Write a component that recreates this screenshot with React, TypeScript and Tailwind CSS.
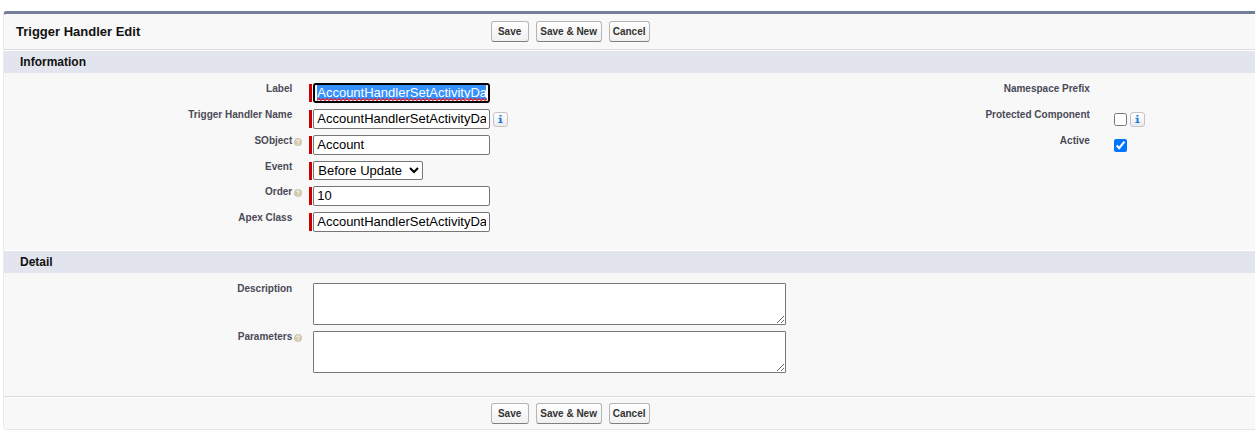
import { useEffect, useRef } from "react";
import type { ReactNode } from "react";
import { clsx } from "clsx";

const inputClass =
  "h-5 w-[177px] rounded-[2px] border border-[#767676] bg-white px-[3px] pb-0.5 text-[13px] text-black";

function HelpIcon() {
  return (
    <svg viewBox="0 0 8 8" className="size-2" aria-hidden="true">
      <circle cx="4" cy="4" r="4" fill="#d3c8ae" />
      <path
        d="M2.7 3.1C2.7 1.4 5.3 1.5 5.3 3C5.3 3.9 4 3.8 4 4.9M4 5.6V6.5"
        fill="none"
        stroke="#fff"
        strokeWidth="1"
      />
    </svg>
  );
}

function InfoButton() {
  return (
    <button
      type="button"
      aria-label="Info"
      className="flex size-[15px] items-center justify-center rounded-[3px] border border-[#c4c4c8] bg-linear-to-b from-white to-[#ececef]"
    >
      <svg viewBox="0 0 5 8" className="h-2 w-[5px]" aria-hidden="true">
        <path
          d="M1.5 0H3.5V1.6H1.5ZM0.5 2.7H3.5V7H4.7V8H0.3V7H1.6V3.7H0.5Z"
          fill="#1477d4"
        />
      </svg>
    </button>
  );
}

// Spelling underline drawn over the selected text
function Squiggle() {
  return (
    <svg
      className="pointer-events-none absolute bottom-0.5 left-1 h-[3px] w-[170px]"
      aria-hidden="true"
    >
      <defs>
        <pattern id="squiggle" width="4" height="3" patternUnits="userSpaceOnUse">
          <path d="M0 2.5L2 0.5L4 2.5" fill="none" stroke="#e0202c" strokeWidth="1.2" />
        </pattern>
      </defs>
      <rect width="100%" height="3" fill="url(#squiggle)" />
    </svg>
  );
}

function FieldLabel({ id, children, help }: { id?: string; children: ReactNode; help?: boolean }) {
  return (
    <div className="flex items-start justify-end gap-0.5 pr-0.5">
      <label htmlFor={id} className="text-[10px] leading-3 font-bold text-[#4a4a56]">
        {children}
      </label>
      <span className="w-2 pt-[3px]">{help && <HelpIcon />}</span>
    </div>
  );
}

type FieldProps = {
  id: string;
  label: string;
  help?: boolean;
  required?: boolean;
  children: ReactNode;
};

function Field({ id, label, help, required, children }: FieldProps) {
  return (
    <div className="grid grid-cols-[37.5%_1fr]">
      <FieldLabel id={id} help={help}>
        {label}
      </FieldLabel>
      <div className="flex items-center gap-px pl-[5px]">
        <span className={clsx("h-[18px] w-[3px]", required && "bg-[#c00]")} />
        {children}
      </div>
    </div>
  );
}

function CheckField({ id, label, children }: { id: string; label: string; children?: ReactNode }) {
  return (
    <div className="grid h-5 grid-cols-[66%_1fr]">
      <FieldLabel id={id}>{label}</FieldLabel>
      <div className="flex items-center gap-[3px] pl-3">{children}</div>
    </div>
  );
}

function DetailField({ id, label, help }: { id: string; label: string; help?: boolean }) {
  return (
    <div className="grid grid-cols-[24%_1fr]">
      <FieldLabel id={id} help={help}>
        {label}
      </FieldLabel>
      <div className="flex pl-[9px]">
        <textarea
          id={id}
          className="h-[42px] w-[473px] resize rounded-[1px] border border-[#767676] bg-white p-0.5 text-[13px]"
        />
      </div>
    </div>
  );
}

function SectionTitle({ children }: { children: ReactNode }) {
  return (
    <h3 className="border-t border-white bg-[#e3e5ee] pl-4 text-[12px] leading-[22px] font-bold text-[#111]">
      {children}
    </h3>
  );
}

function ActionButtons() {
  return (
    <div className="flex gap-[7px]">
      {["Save", "Save & New", "Cancel"].map((name) => (
        <button
          key={name}
          type="button"
          className={clsx(
            "h-[21px] rounded-[3px] border border-[#b5b5b5] border-b-[#7f7f7f] bg-linear-to-b from-white to-[#f0f0f0] text-[10px] font-bold whitespace-nowrap text-[#333]",
            name === "Save" && "w-[38px]",
            name === "Save & New" && "w-[66px]",
            name === "Cancel" && "w-[41px]",
          )}
        >
          {name}
        </button>
      ))}
    </div>
  );
}

export default function App() {
  const labelRef = useRef<HTMLInputElement>(null);

  useEffect(() => {
    const input = labelRef.current;
    if (!input) return;
    input.focus();
    input.setSelectionRange(0, input.value.length, "backward");
    const frame = requestAnimationFrame(() => {
      input.scrollLeft = 0;
    });
    return () => cancelAnimationFrame(frame);
  }, []);

  return (
    <div className="overflow-hidden bg-white pt-[11px] pb-3 pl-[3px] font-['Liberation_Sans',Arial,sans-serif]">
      <form className="rounded-l-[4px] border-t-[3px] border-b border-l border-t-[#747e96] border-b-[#e5e5e5] border-l-[#eaeaea] bg-[#f8f8f8]">
        {/* Header */}
        <div className="flex items-center border-b border-[#dbdbdb] py-[7px]">
          <h2 className="w-[38.9%] pl-3 text-[13px] leading-4 font-bold text-[#111]">
            Trigger Handler Edit
          </h2>
          <ActionButtons />
        </div>

        {/* Information */}
        <SectionTitle>Information</SectionTitle>
        <div className="grid grid-cols-[64%_36%] pt-2.5 pb-[18px]">
          <div className="flex flex-col gap-1.5">
            <Field id="label" label="Label" required>
              <span className="relative flex">
                <input
                  id="label"
                  ref={labelRef}
                  spellCheck={false}
                  defaultValue="AccountHandlerSetActivityDate"
                  className="h-5 w-[177px] rounded-[3px] border-2 border-black bg-white px-0.5 pb-0.5 text-[13px] text-black outline-none selection:bg-[#3390ff] selection:text-white"
                />
                <Squiggle />
              </span>
            </Field>
            <Field id="name" label="Trigger Handler Name" required>
              <input id="name" defaultValue="AccountHandlerSetActivityDate" className={inputClass} />
              <span className="pl-0.5">
                <InfoButton />
              </span>
            </Field>
            <Field id="sobject" label="SObject" help required>
              <input id="sobject" defaultValue="Account" className={inputClass} />
            </Field>
            <Field id="event" label="Event" required>
              <select
                id="event"
                defaultValue="Before Update"
                className="h-[19px] w-[110px] rounded-[2px] border border-[#767676] bg-white text-[13px] text-black"
              >
                <option>Before Insert</option>
                <option>Before Update</option>
                <option>After Update</option>
              </select>
            </Field>
            <Field id="order" label="Order" help required>
              <input id="order" defaultValue="10" className={inputClass} />
            </Field>
            <Field id="apex" label="Apex Class" required>
              <input id="apex" defaultValue="AccountHandlerSetActivityDate" className={inputClass} />
            </Field>
          </div>

          <div className="flex flex-col gap-1.5">
            <CheckField id="prefix" label="Namespace Prefix" />
            <CheckField id="protected" label="Protected Component">
              <input id="protected" type="checkbox" className="size-[13px]" />
              <InfoButton />
            </CheckField>
            <CheckField id="active" label="Active">
              <input id="active" type="checkbox" defaultChecked className="size-[13px]" />
            </CheckField>
          </div>
        </div>

        {/* Detail */}
        <SectionTitle>Detail</SectionTitle>
        <div className="flex flex-col gap-1.5 pt-2.5 pb-[23px]">
          <DetailField id="description" label="Description" />
          <DetailField id="parameters" label="Parameters" help />
        </div>

        {/* Footer */}
        <div className="border-t border-[#dbdbdb]">
          <div className="border-t border-white py-[5px] pl-[38.9%]">
            <ActionButtons />
          </div>
        </div>
      </form>
    </div>
  );
}
